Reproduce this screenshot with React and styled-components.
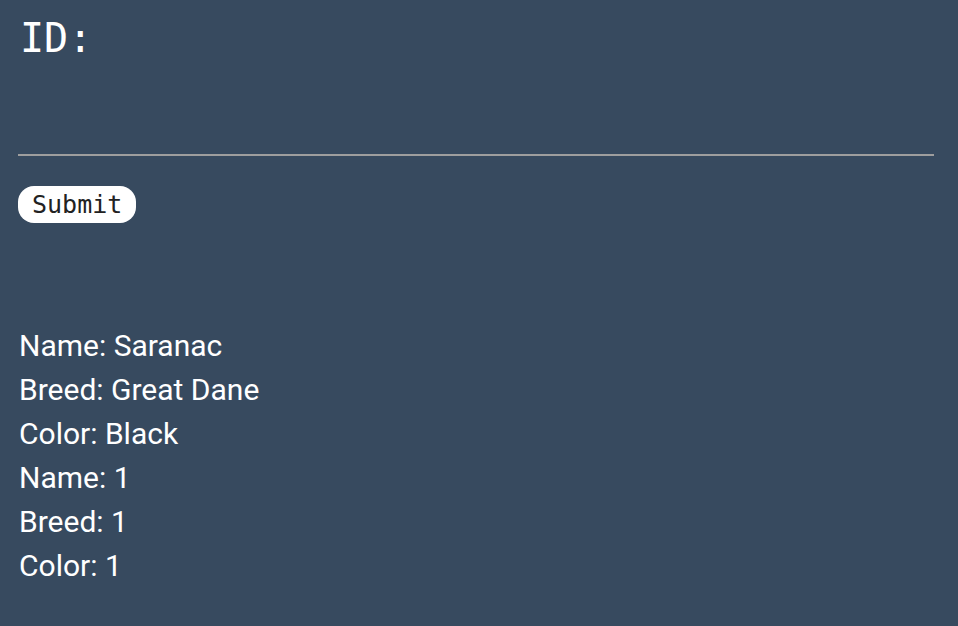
import React from "react";
import styled, { createGlobalStyle } from "styled-components";

const Global = createGlobalStyle`
  html, body { margin: 0; padding: 0; background: #374a5f; }
  body { min-height: 626px; }
`;

const Page = styled.div`
  padding: 14px 24px 20px 18px;
  color: #ffffff;
`;

const Form = styled.form`
  display: flex;
  flex-direction: column;
  align-items: flex-start;
`;

const Label = styled.label`
  font-family: "DejaVu Sans Mono", monospace;
  font-size: 40px;
  line-height: 48px;
  padding-left: 2px;
`;

const Input = styled.input`
  width: 100%;
  box-sizing: border-box;
  margin-top: 92px;
  height: 2px;
  border: none;
  border-bottom: 2px solid #9e9e9e;
  background: transparent;
  outline: none;
  padding: 0;
`;

const Button = styled.button`
  margin-top: 30px;
  height: 37px;
  padding: 0 14px;
  border: none;
  border-radius: 16px;
  background: #ffffff;
  color: #222;
  font-family: "DejaVu Sans Mono", monospace;
  font-size: 25px;
`;

const Results = styled.div`
  margin-top: 101px;
  display: flex;
  flex-direction: column;
`;

const Line = styled.div`
  font-family: Roboto, sans-serif;
  font-size: 30px;
  line-height: 44px;
  padding-left: 1px;
`;

const dogs = [
  { name: "Saranac", breed: "Great Dane", color: "Black" },
  { name: "1", breed: "1", color: "1" },
];

export default function App() {
  return (
    <>
      <Global />
      <Page>
        <Form onSubmit={(e) => e.preventDefault()}>
          <Label htmlFor="id">ID:</Label>
          <Input id="id" type="text" />
          <Button type="submit">Submit</Button>
        </Form>
        <Results>
          {dogs.map((d, i) => (
            <React.Fragment key={i}>
              <Line>Name: {d.name}</Line>
              <Line>Breed: {d.breed}</Line>
              <Line>Color: {d.color}</Line>
            </React.Fragment>
          ))}
        </Results>
      </Page>
    </>
  );
}
